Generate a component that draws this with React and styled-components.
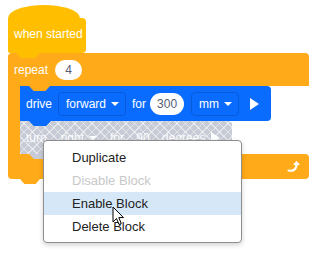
import styled, { createGlobalStyle } from 'styled-components';

const HAT = '#FFBF00';
const ORANGE = '#FFAB19';
const BLUE = '#0A6CFF';

const Global = createGlobalStyle`
  body { margin: 0; background: #fff; font-family: "Liberation Sans", Arial, sans-serif; }
`;

const Workspace = styled.div`
  position: relative;
  width: 329px;
  height: 253px;
  padding: 5px 0 0 8px;
  box-sizing: border-box;
  overflow: hidden;
  font-size: 12px;
  color: #fff;
`;

const Tab = styled.span`
  position: absolute;
  top: 100%;
  left: ${p => p.$left}px;
  width: ${p => p.$w || 22}px;
  height: 5px;
  background: ${p => p.$color};
  clip-path: polygon(0 0, 100% 0, 78% 100%, 22% 100%);
  z-index: 2;
`;

const Hat = styled.div`
  position: relative;
  z-index: 3;
  width: 78px;
  display: flex;
  flex-direction: column;
`;

const Dome = styled.div`
  width: 72px;
  height: 13px;
  background: ${HAT};
  border-radius: 36px 36px 0 0 / 13px 13px 0 0;
`;

const HatBody = styled.div`
  height: 35px;
  background: ${HAT};
  border-radius: 0 4px 4px 2px;
  display: flex;
  align-items: center;
  padding: 0 0 3px 6px;
  box-sizing: border-box;
`;

const Repeat = styled.div`
  width: 301px;
  display: flex;
  flex-direction: column;
`;

const RepeatHead = styled.div`
  position: relative;
  height: 33px;
  background: ${ORANGE};
  border-radius: 4px 4px 0 0;
  display: flex;
  align-items: center;
  gap: 7px;
  padding-left: 6px;
  box-sizing: border-box;
`;

const Middle = styled.div`
  display: flex;
`;

const Arm = styled.div`
  width: 12px;
  background: ${ORANGE};
`;

const Stack = styled.div`
  display: flex;
  flex-direction: column;
`;

const Statement = styled.div`
  position: relative;
  width: ${p => p.$w}px;
  height: ${p => p.$h}px;
  border-radius: 0 4px 4px 0;
  display: flex;
  align-items: center;
  gap: 6px;
  padding-left: 6px;
  box-sizing: border-box;
  background-color: ${BLUE};
  ${p => p.$disabled && `
    background-color: #c6cbd5;
    background-image:
      repeating-linear-gradient(45deg, rgba(255,255,255,0.5) 0 1px, transparent 1px 6px),
      repeating-linear-gradient(-45deg, rgba(255,255,255,0.5) 0 1px, transparent 1px 6px);
    color: rgba(255,255,255,0.95);
  `}
`;

const Foot = styled.div`
  position: relative;
  height: 25px;
  background: ${ORANGE};
  border-radius: 0 4px 4px 4px;
  display: flex;
  align-items: center;
  justify-content: flex-end;
  padding-right: 8px;
`;

const Pill = styled.span`
  width: ${p => p.$w}px;
  height: ${p => p.$h}px;
  border-radius: 11px;
  background: ${p => (p.$ghost ? 'transparent' : '#fff')};
  color: ${p => (p.$ghost ? 'inherit' : '#575E75')};
  display: flex;
  align-items: center;
  justify-content: center;
  margin-left: ${p => p.$ml || 0}px;
`;

const Dropdown = styled.span`
  height: 24px;
  border: 1px solid ${p => (p.$ghost ? 'transparent' : 'rgba(0,0,0,0.15)')};
  border-radius: 4px;
  display: flex;
  align-items: center;
  gap: 5px;
  padding: 0 6px 0 7px;
  box-sizing: border-box;
`;

const Caret = styled.span`
  width: 0;
  height: 0;
  border-left: 4px solid transparent;
  border-right: 4px solid transparent;
  border-top: 4px solid currentColor;
  margin-top: 1px;
`;

const Play = styled.span`
  width: 0;
  height: 0;
  border-top: 6px solid transparent;
  border-bottom: 6px solid transparent;
  border-left: 9px solid currentColor;
  margin-left: ${p => p.$ml || 0}px;
`;

const Menu = styled.div`
  position: absolute;
  left: 43px;
  top: 140px;
  width: 199px;
  padding: 5px 0 4px;
  background: #fff;
  border: 1px solid #8e8e8e;
  border-radius: 4px;
  box-shadow: 0 2px 5px rgba(0,0,0,0.18);
  box-sizing: border-box;
  z-index: 5;
`;

const Item = styled.div`
  height: 23px;
  display: flex;
  align-items: center;
  padding-left: 28px;
  font-size: 13px;
  color: ${p => (p.$disabled ? '#c8c8c8' : '#222')};
  background: ${p => (p.$active ? '#D6E8F7' : 'transparent')};
`;

const Cursor = styled.svg`
  position: absolute;
  left: 112px;
  top: 206px;
  z-index: 6;
`;

export default function App() {
  return (
    <Workspace>
      <Global />
      <Hat>
        <Dome />
        <HatBody>when started</HatBody>
        <Tab $left={8} $w={24} $color={HAT} />
      </Hat>
      <Repeat>
        <RepeatHead>
          repeat
          <Pill $w={27} $h={20}>4</Pill>
          <Tab $left={21} $w={21} $color={ORANGE} />
        </RepeatHead>
        <Middle>
          <Arm />
          <Stack>
            <Statement $w={251} $h={35}>
              drive
              <Dropdown>forward<Caret /></Dropdown>
              for
              <Pill $w={34} $h={22} $ml={-2}>300</Pill>
              <Dropdown style={{ marginLeft: 1 }}>mm<Caret /></Dropdown>
              <Play $ml={5} />
              <Tab $left={9} $w={22} $color={BLUE} />
            </Statement>
            <Statement $w={212} $h={33} $disabled>
              turn
              <Dropdown $ghost>right<Caret /></Dropdown>
              for
              <Pill $w={26} $h={22} $ghost>90</Pill>
              degrees
              <Play $ml={0} />
              <Tab $left={9} $w={22} $color="#c6cbd5" />
            </Statement>
          </Stack>
        </Middle>
        <Foot>
          <svg width="14" height="13" viewBox="0 0 14 13">
            <path d="M1.5 10.5 C6 11.5 9.5 9.5 9.5 4.5" fill="none" stroke="#fff" strokeWidth="2.2" strokeLinecap="round" />
            <path d="M6 5 L9.5 0.8 L13 5 Z" fill="#fff" />
          </svg>
          <Tab $left={12} $w={20} $color={ORANGE} />
        </Foot>
      </Repeat>
      <Menu>
        <Item>Duplicate</Item>
        <Item $disabled>Disable Block</Item>
        <Item $active>Enable Block</Item>
        <Item>Delete Block</Item>
      </Menu>
      <Cursor width="13" height="20" viewBox="0 0 13 20">
        <path d="M1 1 L1 16 L4.5 12.5 L7 18.5 L9.3 17.5 L6.8 11.6 L11.5 11.6 Z" fill="#fff" stroke="#000" strokeWidth="1" strokeLinejoin="round" />
      </Cursor>
    </Workspace>
  );
}
